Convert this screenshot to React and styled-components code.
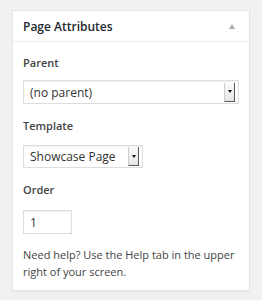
import React from 'react';
import styled, { createGlobalStyle } from 'styled-components';

const GlobalStyle = createGlobalStyle`
  html, body {
    margin: 0;
    padding: 0;
    background: #f1f1f1;
  }
  body {
    font-family: "Open Sans", "Liberation Sans", sans-serif;
    color: #444;
  }
`;

const Page = styled.div`
  padding: 10px 12px 11px 12px;
`;

const Postbox = styled.div`
  background: #fff;
  border: 1px solid #e5e5e5;
  box-shadow: 0 1px 1px rgba(0, 0, 0, 0.04);
`;

const Header = styled.div`
  display: flex;
  align-items: center;
  justify-content: space-between;
  height: 30px;
  padding: 0 10px;
  border-bottom: 1px solid #eee;
`;

const Title = styled.h3`
  margin: 0;
  font-size: 12px;
  font-weight: 600;
  color: #23282d;
`;

const Toggle = styled.span`
  width: 0;
  height: 0;
  margin-right: 4px;
  border-left: 3px solid transparent;
  border-right: 3px solid transparent;
  border-bottom: 5px solid #aaa;
`;

const Inside = styled.div`
  padding: 13px 10px 10px 10px;
  display: flex;
  flex-direction: column;
`;

const Label = styled.div`
  font-size: 11px;
  font-weight: 600;
  color: #444;
  line-height: 16px;
  margin-bottom: ${p => p.$gap}px;
`;

const SelectBox = styled.div`
  box-sizing: border-box;
  width: ${p => p.$width}px;
  height: ${p => p.$height}px;
  border: 1px solid #ddd;
  box-shadow: inset 0 1px 2px rgba(0, 0, 0, 0.07);
  display: flex;
  align-items: center;
  justify-content: space-between;
  padding: 0 3px 0 6px;
  font-size: 12px;
  color: #333;
  margin-bottom: ${p => p.$gap}px;
`;

const ArrowButton = styled.span`
  box-sizing: border-box;
  width: 11px;
  height: 19px;
  background: linear-gradient(#fafafa, #e6e6e6);
  border-right: 1px solid #555;
  border-bottom: 1px solid #555;
  border-left: 1px solid #ccc;
  display: flex;
  align-items: center;
  justify-content: center;
  &::after {
    content: '';
    width: 0;
    height: 0;
    border-left: 2.5px solid transparent;
    border-right: 2.5px solid transparent;
    border-top: 3px solid #111;
  }
`;

const NumberBox = styled.div`
  box-sizing: border-box;
  width: 49px;
  height: 24px;
  border: 1px solid #ddd;
  box-shadow: inset 0 1px 2px rgba(0, 0, 0, 0.07);
  display: flex;
  align-items: center;
  padding-left: 6px;
  font-size: 12px;
  color: #333;
  margin-bottom: 12px;
`;

const Help = styled.p`
  margin: 0;
  font-size: 11px;
  line-height: 17px;
  color: #444;
`;

export default function App() {
  return (
    <Page>
      <GlobalStyle />
      <Postbox>
        <Header>
          <Title>Page Attributes</Title>
          <Toggle />
        </Header>
        <Inside>
          <Label $gap={9}>Parent</Label>
          <SelectBox $width={216} $height={24} $gap={14}>
            (no parent)
            <ArrowButton />
          </SelectBox>
          <Label $gap={11}>Template</Label>
          <SelectBox $width={120} $height={23} $gap={14}>
            Showcase Page
            <ArrowButton />
          </SelectBox>
          <Label $gap={12}>Order</Label>
          <NumberBox>1</NumberBox>
          <Help>Need help? Use the Help tab in the upper right of your screen.</Help>
        </Inside>
      </Postbox>
    </Page>
  );
}
